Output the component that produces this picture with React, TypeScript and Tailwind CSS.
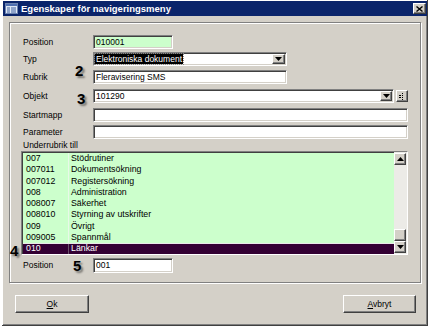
import React from "react";

const sunken =
  "border-t border-l border-[#808080] border-b border-r border-b-white border-r-white shadow-[inset_1px_1px_0_#404040,inset_-1px_-1px_0_#d4d0c8]";
const raised =
  "bg-[#d4d0c8] border-t border-l border-white border-b border-r border-b-[#404040] border-r-[#404040] shadow-[inset_-1px_-1px_0_#808080]";

function Arrow({ up = false }: { up?: boolean }) {
  return (
    <svg width="7" height="4" viewBox="0 0 7 4" className={up ? "rotate-180" : ""}>
      <path d="M0 0h7L3.5 4z" fill="#000" />
    </svg>
  );
}

function Badge({ n, className }: { n: string; className: string }) {
  return (
    <span
      className={
        "absolute font-['Liberation_Sans',sans-serif] font-bold text-[15px] leading-none text-black [text-shadow:2px_2px_2px_rgba(0,0,0,0.45)] " +
        className
      }
    >
      {n}
    </span>
  );
}

const rows: [string, string][] = [
  ["007", "Stödrutiner"],
  ["007011", "Dokumentsökning"],
  ["007012", "Registersökning"],
  ["008", "Administration"],
  ["008007", "Säkerhet"],
  ["008010", "Styrning av utskrifter"],
  ["009", "Övrigt"],
  ["009005", "Spannmål"],
  ["010", "Länkar"],
];

function Label({ children }: { children: React.ReactNode }) {
  return <div className="w-[70px] shrink-0 text-[8.5px] text-black">{children}</div>;
}

export default function App() {
  return (
    <div className="w-[429px] h-[328px] bg-white overflow-hidden relative font-['Liberation_Sans',sans-serif]">
      <div className="ml-[2px] w-[426px] h-[326px] bg-[#d4d0c8] p-[1px] flex flex-col shadow-[inset_-1px_-1px_0_#404040,inset_1px_1px_0_#fff,inset_-2px_-2px_0_#808080]">
        {/* Title bar */}
        <div className="h-[15px] bg-[#0a246a] flex items-center pl-[2px] pr-[1px]">
          <svg width="13" height="11" viewBox="0 0 13 11" className="shrink-0">
            <rect x="0.5" y="0.5" width="12" height="10" fill="#dfe8f5" stroke="#6b82b0" />
            <rect x="1" y="1" width="11" height="2" fill="#4f6fb0" />
            <rect x="2" y="4.5" width="3" height="1" fill="#4060a0" />
            <rect x="6" y="4.5" width="5" height="1" fill="#4060a0" />
            <rect x="2" y="6.5" width="3" height="1" fill="#4060a0" />
            <rect x="6" y="6.5" width="5" height="1" fill="#4060a0" />
            <rect x="2" y="8.5" width="3" height="1" fill="#4060a0" />
            <rect x="6" y="8.5" width="5" height="1" fill="#4060a0" />
          </svg>
          <span className="ml-[3px] text-white font-bold text-[9.5px] leading-none">
            Egenskaper för navigeringsmeny
          </span>
          <div className={"ml-auto w-[13px] h-[11px] flex items-center justify-center " + raised}>
            <svg width="7" height="6" viewBox="0 0 7 6">
              <path d="M0.5 0.5L6.5 5.5M6.5 0.5L0.5 5.5" stroke="#000" strokeWidth="1.4" />
            </svg>
          </div>
        </div>

        {/* Group box */}
        <div className="relative ml-[6px] mt-[6px] w-[412px] h-[261px] border border-[#808080] shadow-[1px_1px_0_#fff,inset_1px_1px_0_#fff] flex flex-col">
          {/* Position */}
          <div className="flex items-center pl-[13px] mt-[12px] h-[14px]">
            <Label>Position</Label>
            <div className={"w-[80px] h-[14px] bg-[#ccffcc] flex items-center pl-[2px] text-[8.5px] " + sunken}>
              010001
            </div>
          </div>
          {/* Typ */}
          <div className="flex items-center pl-[13px] mt-[3px] h-[14px]">
            <Label>Typ</Label>
            <div className={"w-[194px] h-[14px] bg-white flex items-center pl-[1px] pr-[1px] text-[8.5px] " + sunken}>
              <span className="bg-black text-white px-[1px] leading-[10px] outline outline-1 outline-dotted outline-[#888]">
                Elektroniska dokument
              </span>
              <div className={"ml-auto w-[13px] h-[10px] flex items-center justify-center " + raised}>
                <Arrow />
              </div>
            </div>
          </div>
          {/* Rubrik */}
          <div className="flex items-center pl-[13px] mt-[4px] h-[14px]">
            <Label>Rubrik</Label>
            <div className={"w-[194px] h-[14px] bg-white flex items-center pl-[2px] text-[8.5px] " + sunken}>
              Fleravisering SMS
            </div>
          </div>
          {/* Objekt */}
          <div className="flex items-center pl-[13px] mt-[5px] h-[14px]">
            <Label>Objekt</Label>
            <div className={"w-[301px] h-[14px] bg-white flex items-center pl-[2px] pr-[1px] text-[8.5px] " + sunken}>
              101290
              <div className={"ml-auto w-[12px] h-[10px] flex items-center justify-center " + raised}>
                <Arrow />
              </div>
            </div>
            <div className={"ml-[2px] w-[12px] h-[12px] flex items-center justify-center " + raised}>
              <svg width="6" height="7" viewBox="0 0 6 7">
                <rect x="3" y="0" width="1" height="1" fill="#000" />
                <rect x="0" y="2" width="2" height="1" fill="#000" />
                <rect x="3" y="2" width="1" height="1" fill="#000" />
                <rect x="0" y="4" width="2" height="1" fill="#000" />
                <rect x="3" y="4" width="1" height="1" fill="#000" />
                <rect x="3" y="6" width="1" height="1" fill="#000" />
              </svg>
            </div>
          </div>
          {/* Startmapp */}
          <div className="flex items-center pl-[13px] mt-[5px] h-[14px]">
            <Label>Startmapp</Label>
            <div className={"w-[315px] h-[14px] bg-white " + sunken} />
          </div>
          {/* Parameter */}
          <div className="flex items-center pl-[13px] mt-[3px] h-[14px]">
            <Label>Parameter</Label>
            <div className={"w-[315px] h-[14px] bg-white " + sunken} />
          </div>
          <div className="pl-[13px] mt-[1px] h-[11px] text-[8.5px] leading-[11px]">Underrubrik till</div>
          {/* List */}
          <div className={"ml-[11px] w-[387px] h-[104px] bg-[#ccffcc] flex " + sunken}>
            <div className="flex-1 flex flex-col pt-[1px] pl-[1px]">
              {rows.map(([code, name], i) => {
                const sel = i === rows.length - 1;
                return (
                  <div
                    key={code}
                    className={
                      "h-[11.33px] flex items-center text-[8.8px] leading-none " +
                      (sel ? "bg-[#330033] text-white border-t border-[#e8e8e8]" : "text-black")
                    }
                  >
                    <div className="w-[45px] pl-[3px] shrink-0">{code}</div>
                    <div className={"self-stretch flex items-center pl-[2px] border-l " + (sel ? "border-[#6a506a]" : "border-[#e8f8e8]")}>
                      {name}
                    </div>
                  </div>
                );
              })}
            </div>
            {/* Scrollbar */}
            <div className="w-[13px] flex flex-col bg-[#ecebe7] pt-[1px] pb-[1px] pr-[1px]">
              <div className={"h-[12px] flex items-center justify-center " + raised}>
                <Arrow up />
              </div>
              <div className="flex-1" />
              <div className={"h-[12px] " + raised} />
              <div className={"h-[12px] flex items-center justify-center " + raised}>
                <Arrow />
              </div>
            </div>
          </div>
          {/* Position 2 */}
          <div className="flex items-center pl-[13px] mt-[3px] h-[15px]">
            <Label>Position</Label>
            <div className={"w-[80px] h-[15px] bg-white flex items-center pl-[2px] text-[8.5px] " + sunken}>
              001
            </div>
          </div>

          <Badge n="2" className="left-[65px] top-[40px]" />
          <Badge n="3" className="left-[67px] top-[68px]" />
          <Badge n="4" className="left-[0px] top-[220px]" />
          <Badge n="5" className="left-[63px] top-[235px]" />
        </div>

        {/* Buttons */}
        <div className="flex justify-between mt-[12px] pl-[12px] pr-[11px]">
          <div className={"w-[74px] h-[18px] flex items-center justify-center text-[8.5px] " + raised}>
            <span><span className="underline">O</span>k</span>
          </div>
          <div className={"w-[73px] h-[18px] flex items-center justify-center text-[8.5px] " + raised}>
            <span><span className="underline">A</span>vbryt</span>
          </div>
        </div>
      </div>
    </div>
  );
}
